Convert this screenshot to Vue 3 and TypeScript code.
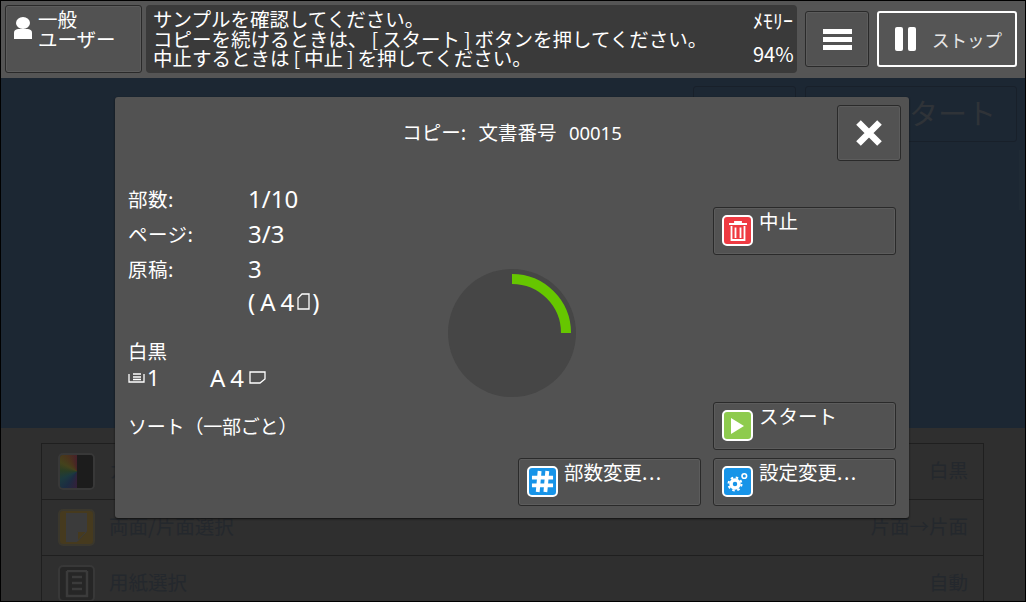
<script setup lang="ts">
interface Row { label: string; value: string; icon: string }
const rows: Row[] = [
  { label: 'カラーモード', value: '白黒', icon: 'color' },
  { label: '両面/片面選択', value: '片面→片面', icon: 'duplex' },
  { label: '用紙選択', value: '自動', icon: 'paper' },
]
</script>

<template>
  <div class="screen">
    <header class="topbar">
      <button class="btn user">
        <svg class="user-icon" width="18" height="22" viewBox="0 0 18 22">
          <ellipse cx="9" cy="6" rx="7" ry="6" fill="#fff" />
          <path d="M0 22V15.500Q0 12.500 4 12H14Q18 12.500 18 15.500V22Z" fill="#fff" />
        </svg>
        <span class="user-text">一般<br />ユーザー</span>
      </button>
      <div class="message">
        <p>サンプルを確認してください。<br />コピーを続けるときは、<span class="br">[</span>スタート<span class="br">]</span>ボタンを押してください。<br />中止するときは<span class="br">[</span>中止<span class="br">]</span>を押してください。</p>
        <div class="memory"><span>ﾒﾓﾘｰ</span><span>94%</span></div>
      </div>
      <button class="btn menu" aria-label="メニュー"><i></i><i></i><i></i></button>
      <button class="stop">
        <span class="pause"><i></i><i></i></span>
        <span>ストップ</span>
      </button>
    </header>

    <main class="backdrop">
      <div class="back-actions">
        <div class="back-btn small"></div>
        <div class="back-btn large">スタート</div>
      </div>
      <i class="scroll"></i>
    </main>

    <section class="lower">
      <ul class="list">
        <li v-for="row in rows" :key="row.label" class="row">
          <span class="row-icon" :class="row.icon">
            <svg v-if="row.icon === 'duplex'" width="21" height="29" viewBox="0 0 21 29">
              <path d="M0 0H21V18L11 29H0Z" fill="#3b3b3b" />
              <path d="M11.500 28V18.500H20.500Z" fill="#463a1e" stroke="#3b3b3b" />
            </svg>
            <svg v-else-if="row.icon === 'paper'" width="26" height="28" viewBox="0 0 26 28" fill="none" stroke="#3b3b3b" stroke-width="2.500">
              <path d="M3 1V26H23V1M8 7H18M8 13H18M8 19H18M3 1H23" />
            </svg>
            <template v-else><b class="fan"></b><b class="black"></b></template>
          </span>
          <span class="row-label">{{ row.label }}</span>
          <span class="row-value">{{ row.value }}</span>
        </li>
      </ul>
    </section>

    <div class="modal">
      <div class="modal-head">
        <h1>コピー: 文書番号 <span class="doc-no">00015</span></h1>
        <button class="btn close" aria-label="閉じる">
          <svg width="30" height="30" viewBox="0 0 30 30"><path d="M4.500 4.500 25.500 25.500M25.500 4.500 4.500 25.500" stroke="#fff" stroke-width="6.500" /></svg>
        </button>
      </div>

      <div class="modal-body">
        <div class="info">
          <dl class="facts">
            <dt>部数:</dt><dd>1/10</dd>
            <dt>ページ:</dt><dd>3/3</dd>
            <dt>原稿:</dt><dd>3</dd>
            <dt></dt>
            <dd class="size"><span class="spaced">(A4</span><svg width="13" height="17" viewBox="0 0 13 17" fill="none" stroke="#fff" stroke-width="1.300"><path d="M1 16V5L5 1H12V16Z" /></svg><span>)</span></dd>
          </dl>
          <p class="mode">白黒</p>
          <div class="output">
            <span class="tray">
              <svg width="17" height="12" viewBox="0 0 17 12" fill="none" stroke="#fff" stroke-width="1.300"><path d="M1 3V11H16V3M5 3H13M5 6H13M5 8.500H13" /></svg>1
            </span>
            <span class="output-size"><span class="spaced">A4</span><svg width="17" height="13" viewBox="0 0 17 13" fill="none" stroke="#fff" stroke-width="1.300"><path d="M1 1H16V8L11 12H1Z" /></svg></span>
          </div>
          <p class="sort">ソート（一部ごと）</p>
        </div>

        <div class="ring">
          <svg width="128" height="128" viewBox="0 0 128 128">
            <circle cx="64" cy="64" r="64" fill="#464646" />
            <path d="M64 10A54 54 0 0 1 118 64" fill="none" stroke="#66c600" stroke-width="10" />
          </svg>
        </div>

        <div class="side">
          <button class="btn action">
            <span class="badge red">
              <svg width="18" height="20" viewBox="0 0 18 20" fill="none" stroke="#fff"><path d="M0 3H18M6 2V1H12V2" stroke-width="1.800" /><path d="M2.500 5V19H15.500V5" stroke-width="1.800" /><path d="M6.500 6.500V17M11.500 6.500V17" stroke-width="1.800" /></svg>
            </span>
            <span>中止</span>
          </button>
          <button class="btn action">
            <span class="badge green">
              <svg width="13" height="16" viewBox="0 0 13 16"><path d="M0 0V16L13 8Z" fill="#fff" /></svg>
            </span>
            <span>スタート</span>
          </button>
        </div>
      </div>

      <div class="modal-foot">
        <button class="btn action">
          <span class="badge blue">
            <svg width="23" height="23" viewBox="0 0 24 24" fill="none" stroke="#fff" stroke-width="4"><path d="M9 1 7 23M17 1 15 23M1 8H23M1 16H23" /></svg>
          </span>
          <span>部数変更<span class="dots">...</span></span>
        </button>
        <button class="btn action">
          <span class="badge blue">
            <svg width="24" height="24" viewBox="0 0 24 24" fill="none" stroke="#fff">
              <circle cx="9" cy="14" r="4" stroke-width="3.500" />
              <circle cx="9" cy="14" r="6.500" stroke-width="2" stroke-dasharray="2.500 2.600" />
              <circle cx="18.300" cy="6" r="2.300" stroke-width="1.600" />
            </svg>
          </span>
          <span>設定変更<span class="dots">...</span></span>
        </button>
      </div>
    </div>
  </div>
</template>

<style>
html, body { margin: 0; background: #000; }
</style>

<style scoped>
* { box-sizing: border-box; }
p, h1, dl, dd, ul { margin: 0; padding: 0; }
i, b { display: block; }
button { font: inherit; color: inherit; padding: 0; }

.screen {
  position: relative;
  width: 1026px;
  height: 602px;
  overflow: hidden;
  display: flex;
  flex-direction: column;
  border: 1px solid #000;
  font-family: "Noto Sans CJK JP", "Noto Sans", sans-serif;
  color: #fff;
  background: #1c2733;
}

.btn {
  border: 1px solid #2a2a2a;
  border-radius: 3px;
  background: #525252;
  box-shadow: inset 0 0 0 1px #5c5c5c;
}

.topbar {
  flex: 0 0 77px;
  display: flex;
  align-items: center;
  padding: 0 8px 1px 4px;
  background: #555;
}
.user {
  width: 137px;
  height: 68px;
  display: flex;
  align-items: flex-start;
  padding: 3px 0 0 7px;
  text-align: left;
}
.user-icon { margin: 8px 6px 0 1px; flex: none; }
.user-text { font-size: 19.500px; line-height: 20px; }
.message {
  width: 651px;
  height: 68px;
  margin-left: 4px;
  padding: 4px 4px 0 7px;
  display: flex;
  justify-content: space-between;
  background: #3a3a3a;
  border-radius: 4px;
  font-size: 19.500px;
  line-height: 19.500px;
}
.br { display: inline-block; width: 14.500px; text-align: center; }
.memory {
  width: 40px;
  display: flex;
  flex-direction: column;
  gap: 11px;
  font-size: 20px;
  line-height: 22px;
  white-space: nowrap;
  padding-top: 1px;
}
.menu {
  width: 64px;
  height: 56px;
  margin-left: 8px;
  display: flex;
  flex-direction: column;
  align-items: center;
  justify-content: center;
  gap: 3px;
}
.menu i { width: 29px; height: 5px; background: #fff; }
.stop {
  width: 140px;
  height: 56px;
  margin-left: 8px;
  display: flex;
  align-items: center;
  gap: 16px;
  padding: 0 0 0 16px;
  background: #555;
  border: 2px solid #fff;
  border-radius: 3px;
  color: #e6e6e6;
  font-size: 17.500px;
}
.pause { display: flex; gap: 5px; }
.pause i { width: 8px; height: 24px; border-radius: 2px; background: #fff; }

.backdrop {
  position: relative;
  flex: 0 0 350px;
  background: #1c2733;
}
.back-actions {
  display: flex;
  justify-content: flex-end;
  gap: 9px;
  padding: 8px 8px 0 0;
}
.back-btn {
  height: 56px;
  border: 1px solid #18202a;
  border-radius: 3px;
}
.small { width: 103px; }
.large {
  width: 212px;
  padding: 0 20px 0 0;
  text-align: right;
  font-size: 29px;
  line-height: 50px;
  color: #2f3338;
}
.scroll {
  position: absolute;
  right: 0;
  top: 72px;
  width: 6px;
  height: 60px;
  background: #1f2a35;
}

.lower {
  flex: 1;
  padding: 15px 41px 0 40px;
  background: #2f2f2f;
}
.list { list-style: none; border: 1px solid #1f1f1f; border-bottom: 0; }
.row {
  height: 56px;
  display: flex;
  align-items: center;
  gap: 14px;
  padding: 0 15px 0 16px;
  border-bottom: 1px solid #1f1f1f;
  font-size: 19.500px;
  color: #24282d;
}
.row-label, .row-value { margin-top: -4px; }
.row-value { margin-left: auto; }
.row-icon {
  width: 37px;
  height: 37px;
  display: flex;
  align-items: center;
  justify-content: center;
  border-radius: 5px;
  border: 2px solid #383838;
  overflow: hidden;
}
.row-icon.duplex { background: #463a1e; border-color: #3a372d; }
.row-icon.paper { background: #262626; }
.fan {
  width: 50%;
  height: 100%;
  background: conic-gradient(from 180deg at 100% 50%, #33203a 0%, #1c2c42 10%, #1c3a3e 18%, #2a3d24 26%, #44421c 33%, #4a331c 41%, #47202a 50%);
}
.black { width: 50%; height: 100%; background: #1c1c1c; }

.modal {
  position: absolute;
  left: 114px;
  top: 96px;
  width: 794px;
  height: 421px;
  display: flex;
  flex-direction: column;
  padding: 0 13px;
  border-radius: 3px;
  background: #525252;
  box-shadow: 0 1px 2px #111;
}
.modal-head {
  position: relative;
  height: 72px;
  flex: none;
}
.modal-head h1 {
  padding: 24px 0 0;
  text-align: center;
  font-size: 19.500px;
  font-weight: 400;
  line-height: 22px;
  word-spacing: 8px;
}
.doc-no { font-family: "Noto Sans", sans-serif; font-size: 18.500px; }
.close {
  position: absolute;
  top: 8px;
  right: -5px;
  width: 64px;
  height: 56px;
  display: flex;
  align-items: center;
  justify-content: center;
}
.modal-body {
  flex: none;
  height: 281px;
  display: flex;
  font-size: 19.500px;
}
.info { width: 320px; flex: none; }
.facts {
  display: grid;
  grid-template-columns: 120px 1fr;
  grid-auto-rows: 35px;
  align-items: center;
  padding-top: 12px;
}
.facts dt { font-size: 19.500px; letter-spacing: 0.500px; }
.facts dd { font-family: "Noto Sans", sans-serif; font-size: 24px; }
.spaced { font-family: "Noto Sans", sans-serif; font-size: 24px; letter-spacing: 5px; }
.facts dd.size {
  height: 30px;
  display: flex;
  align-items: center;
  margin-top: -5px;
}
.facts dd.size svg { margin: 0 2px 0 -2px; }
.mode { margin-top: 18px; line-height: 24px; }
.output {
  display: flex;
  height: 28px;
  align-items: center;
  font-family: "Noto Sans", sans-serif;
  font-size: 22px;
}
.tray { width: 82px; display: flex; align-items: center; gap: 2px; }
.output-size { display: flex; align-items: center; gap: 0; }
.sort { margin-top: 23px; line-height: 24px; font-size: 19px; letter-spacing: -0.200px; }
.ring { width: 128px; flex: none; padding-top: 100px; }
.side {
  margin-left: auto;
  width: 183px;
  display: flex;
  flex-direction: column;
  justify-content: space-between;
  padding-top: 38px;
}
.modal-foot {
  display: flex;
  justify-content: flex-end;
  gap: 12px;
  padding-top: 8px;
}
.action {
  width: 183px;
  height: 48px;
  display: flex;
  align-items: flex-start;
  gap: 6px;
  padding: 2px 0 0 8px;
  font-size: 19.500px;
  line-height: 22px;
  text-align: left;
}
.dots { letter-spacing: 1.500px; }
.badge {
  margin-top: 5px;
  width: 31px;
  height: 31px;
  flex: none;
  display: flex;
  align-items: center;
  justify-content: center;
  border: 2px solid #fff;
  border-radius: 5px;
}
.red { background: #ef3a42; }
.green { background: #8ecb4e; }
.blue { background: #1794e8; }
</style>
